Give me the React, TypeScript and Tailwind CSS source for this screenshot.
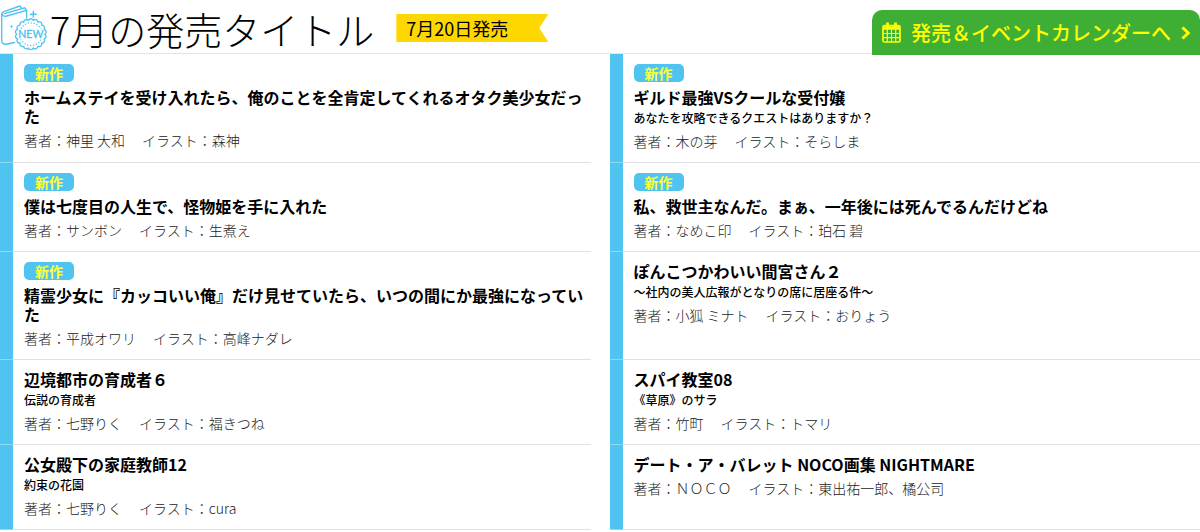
type Title = {
  isNew?: boolean;
  title: string;
  subtitle?: string;
  author: string;
  illustrator: string;
};

const titles: Title[] = [
  { isNew: true, title: "ホームステイを受け入れたら、俺のことを全肯定してくれるオタク美少女だった", author: "神里 大和", illustrator: "森神" },
  { isNew: true, title: "ギルド最強VSクールな受付嬢", subtitle: "あなたを攻略できるクエストはありますか？", author: "木の芽", illustrator: "そらしま" },
  { isNew: true, title: "僕は七度目の人生で、怪物姫を手に入れた", author: "サンボン", illustrator: "生煮え" },
  { isNew: true, title: "私、救世主なんだ。まぁ、一年後には死んでるんだけどね", author: "なめこ印", illustrator: "珀石 碧" },
  { isNew: true, title: "精霊少女に『カッコいい俺』だけ見せていたら、いつの間にか最強になっていた", author: "平成オワリ", illustrator: "高峰ナダレ" },
  { title: "ぽんこつかわいい間宮さん２", subtitle: "～社内の美人広報がとなりの席に居座る件～", author: "小狐 ミナト", illustrator: "おりょう" },
  { title: "辺境都市の育成者６", subtitle: "伝説の育成者", author: "七野りく", illustrator: "福きつね" },
  { title: "スパイ教室08", subtitle: "《草原》のサラ", author: "竹町", illustrator: "トマリ" },
  { title: "公女殿下の家庭教師12", subtitle: "約束の花園", author: "七野りく", illustrator: "cura" },
  { title: "デート・ア・バレット NOCO画集 NIGHTMARE", author: "ＮＯＣＯ", illustrator: "東出祐一郎、橘公司" },
];

function sealPath(cx: number, cy: number, r: number, lobes: number) {
  const point = (i: number) => {
    const a = (i / lobes) * Math.PI * 2;
    return `${(cx + r * Math.cos(a)).toFixed(2)} ${(cy + r * Math.sin(a)).toFixed(2)}`;
  };
  let d = `M${point(0)}`;
  for (let i = 1; i <= lobes; i++) d += `A2.6 2.6 0 0 1 ${point(i)}`;
  return `${d}Z`;
}

function NewBookIcon() {
  return (
    <svg viewBox="0 0 48 50" className="h-[50px] w-12 shrink-0" fill="none" stroke="#4fc3ee" strokeWidth="1.4" strokeLinecap="round" strokeLinejoin="round" aria-hidden="true">
      <path d="M14.500 42.500L6.500 44.200Q1.700 44.700 1.700 40V14.500Q1.700 12.300 4.500 11.300L20 6L21.500 8.200" />
      <path d="M1.900 14Q3 17 6 16.200L26.600 10.300V18" />
      <path d="M4.500 13.700L24.500 7.800L26.600 10.300" />
      <path d="M33.300 11.300V17M30.500 14.200H36.100" />
      <path d="M11.500 25.700V27.300M10.700 26.500H12.300" strokeWidth="1" />
      <path d={sealPath(30.8, 34.2, 14, 18)} fill="#fff" strokeWidth="1.3" />
      <circle cx="30.800" cy="34.200" r="11.300" strokeWidth="1.300" strokeDasharray="0.200 2.760" />
      <rect x="18.500" y="29" width="25" height="10.500" fill="#fff" stroke="none" />
      <text x="30.800" y="38" textAnchor="middle" fontSize="10.500" className="font-['Lato',sans-serif]" fill="#4fc3ee" stroke="#4fc3ee" strokeWidth="0.350">NEW</text>
    </svg>
  );
}

function CalendarIcon() {
  return (
    <svg viewBox="0 0 19 21" className="h-[21px] w-[19px] shrink-0" fill="none" stroke="currentColor" aria-hidden="true">
      <rect x="1" y="3.500" width="17" height="16.500" rx="1.500" strokeWidth="1.700" />
      <path d="M1 6H18" strokeWidth="3.500" />
      <path d="M5.500 0.500V5M13.500 0.500V5" strokeWidth="2.800" />
      <path d="M1 11.500H18M1 15.700H18M5.300 7V20M9.500 7V20M13.700 7V20" strokeWidth="1.200" />
    </svg>
  );
}

function ChevronIcon() {
  return (
    <svg viewBox="0 0 10 14" className="ml-2.5 h-3.5 w-2.5 shrink-0" fill="none" stroke="currentColor" strokeWidth="3" aria-hidden="true">
      <path d="M1.500 1.500L7.200 7L1.500 12.500" />
    </svg>
  );
}

function TitleCard({ item }: { item: Title }) {
  return (
    <li className="flex">
      <div className="w-[13px] shrink-0 border-b border-[#8fd8f4] bg-[#50c4f0]" />
      <div className="min-w-0 flex-1 border-b border-[#e2e0e2] pt-2.5 pr-1 pb-[11px] pl-[11px]">
        {item.isNew && (
          <span className="mb-1.5 block h-[18px] w-[50px] rounded-[5px] bg-[#50c4f0] text-center text-sm leading-[18px] font-bold text-[#ffff33]">新作</span>
        )}
        <h2 className="text-base leading-[19px] font-bold text-black">{item.title}</h2>
        {item.subtitle && <p className="mt-0.5 text-xs leading-[18px] font-medium text-black">{item.subtitle}</p>}
        <p className="mt-1 text-sm leading-5 font-light text-[#222]">
          <span className="mr-[17px]">著者：{item.author}</span>
          <span>イラスト：{item.illustrator}</span>
        </p>
      </div>
    </li>
  );
}

export default function App() {
  return (
    <main lang="ja" className="bg-white font-['Noto_Sans_CJK_JP',sans-serif] text-black">
      <header className="flex h-[54px] items-start border-b border-[#e4e4e4]">
        <NewBookIcon />
        <h1 className="ml-0.5 pt-1 text-[38px] leading-[50px] font-light whitespace-nowrap">7月の発売タイトル</h1>
        <p className="mt-3.5 ml-[22px] h-7 w-[152px] bg-[#ffd700] pl-2.5 text-lg leading-7 whitespace-nowrap [clip-path:polygon(0_0,100%_0,94%_50%,100%_100%,0_100%)]">7月20日発売</p>
        <a href="#calendar" className="mt-2.5 ml-auto flex h-[45px] w-[328px] shrink-0 items-center rounded-t-[10px] bg-[#3fae35] pl-2.5 text-xl font-medium whitespace-nowrap text-[#ffff00]">
          <CalendarIcon />
          <span className="ml-2.5">発売＆イベントカレンダーへ</span>
          <ChevronIcon />
        </a>
      </header>
      <ul className="grid grid-cols-2 gap-x-[19px]">
        {titles.map((item) => (
          <TitleCard key={item.title} item={item} />
        ))}
      </ul>
    </main>
  );
}
